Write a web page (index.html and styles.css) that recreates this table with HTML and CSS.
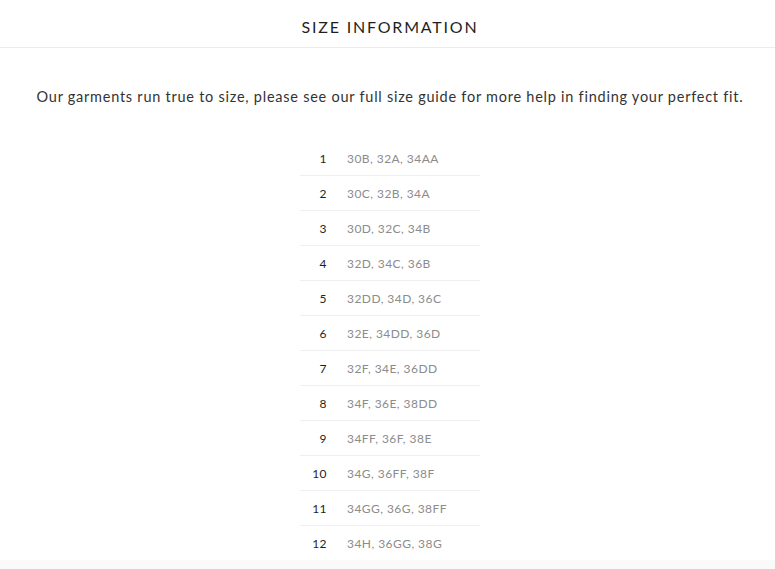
FILE: index.html
```html
<!DOCTYPE html>
<html lang="en">
<head>
<meta charset="utf-8">
<title>Size Information</title>
<link rel="stylesheet" href="styles.css">
</head>
<body>
<div class="panel">
  <header class="panel-header">
    <h1 class="panel-title">SIZE INFORMATION</h1>
  </header>
  <div class="panel-body">
    <p class="intro">Our garments run true to size, please see our full size guide for more help in finding your perfect fit.</p>
    <table class="size-table">
      <tbody>
        <tr><td class="num">1</td><td class="sizes">30B, 32A, 34AA</td></tr>
        <tr><td class="num">2</td><td class="sizes">30C, 32B, 34A</td></tr>
        <tr><td class="num">3</td><td class="sizes">30D, 32C, 34B</td></tr>
        <tr><td class="num">4</td><td class="sizes">32D, 34C, 36B</td></tr>
        <tr><td class="num">5</td><td class="sizes">32DD, 34D, 36C</td></tr>
        <tr><td class="num">6</td><td class="sizes">32E, 34DD, 36D</td></tr>
        <tr><td class="num">7</td><td class="sizes">32F, 34E, 36DD</td></tr>
        <tr><td class="num">8</td><td class="sizes">34F, 36E, 38DD</td></tr>
        <tr><td class="num">9</td><td class="sizes">34FF, 36F, 38E</td></tr>
        <tr><td class="num">10</td><td class="sizes">34G, 36FF, 38F</td></tr>
        <tr><td class="num">11</td><td class="sizes">34GG, 36G, 38FF</td></tr>
        <tr><td class="num">12</td><td class="sizes">34H, 36GG, 38G</td></tr>
      </tbody>
    </table>
  </div>
  <div class="panel-footer"></div>
</div>
</body>
</html>
```
FILE: styles.css
```css
html, body {
  margin: 0;
  padding: 0;
  background: #ffffff;
}
body {
  font-family: "Lato", "Noto Sans", sans-serif;
  color: #222;
}
.panel {
  display: flex;
  flex-direction: column;
}
.panel-header {
  height: 47px;
  padding-left: 5px;
  border-bottom: 1px solid #ececec;
  display: flex;
  align-items: center;
  justify-content: center;
}
.panel-title {
  margin: 0;
  padding-top: 6px;
  font-size: 16px;
  font-weight: 400;
  letter-spacing: 1.8px;
  color: #1f1f1f;
}
.panel-body {
  padding-left: 5px;
  display: flex;
  flex-direction: column;
  align-items: center;
}
.intro {
  margin: 39px 0 0;
  font-size: 14.5px;
  letter-spacing: 0.75px;
  color: #333;
  line-height: 20px;
  white-space: nowrap;
}
.size-table {
  margin-top: 34px;
  border-collapse: collapse;
  width: 180px;
}
.size-table td {
  height: 34px;
  padding: 0;
  border-bottom: 1px solid #efefef;
  font-size: 12px;
  letter-spacing: 0.45px;
  vertical-align: middle;
}
.size-table tr:last-child td {
  border-bottom: none;
}
.size-table .num {
  width: 27px;
  text-align: right;
  color: #1f1f1f;
}
.size-table .sizes {
  padding-left: 20px;
  color: #8c8c8c;
}
.panel-footer {
  height: 20px;
  background: #fafafa;
}
```
